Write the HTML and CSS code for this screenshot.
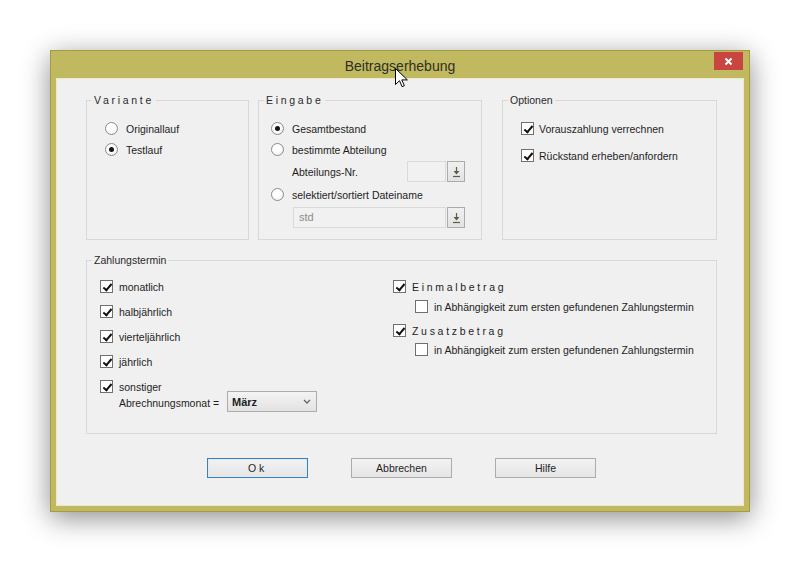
FILE: index.html
```html
<!DOCTYPE html>
<html lang="de">
<head>
<meta charset="UTF-8" />
<title>Beitragserhebung</title>
<link rel="stylesheet" href="styles.css">
</head>
<body>
  <div class="window">
    <div class="titlebar">
      <span class="title">Beitragserhebung</span>
      <button class="close" type="button" aria-label="Schließen">
        <svg width="9" height="9" viewBox="0 0 9 9"><path d="M1.5 1.5l6 6M7.5 1.5l-6 6" stroke="#fff" stroke-width="2"/></svg>
      </button>
    </div>

    <form class="client">
      <div class="top-row">
        <fieldset class="group group-variante">
          <legend class="spaced">Variante</legend>
          <div class="inner">
            <div class="row"><span class="radio"></span>Originallauf</div>
            <div class="row"><span class="radio on"></span>Testlauf</div>
          </div>
        </fieldset>

        <fieldset class="group group-eingabe">
          <legend class="spaced">Eingabe</legend>
          <div class="inner">
            <div class="row"><span class="radio on"></span>Gesamtbestand</div>
            <div class="row"><span class="radio"></span>bestimmte Abteilung</div>
            <div class="row sub">
              Abteilungs-Nr.
              <div class="combo small">
                <span class="field"></span>
                <span class="pick"><svg width="9" height="12" viewBox="0 0 9 12"><path d="M4.5 1v5" stroke="#5b5d48" stroke-width="1.2"/><path d="M1.5 5h6l-3 3.5z" fill="#5b5d48"/><path d="M1 10.5h7" stroke="#5b5d48" stroke-width="1.2"/></svg></span>
              </div>
            </div>
            <div class="row gap2"><span class="radio"></span>selektiert/sortiert Dateiname</div>
            <div class="row gap2 sub2">
              <div class="combo wide">
                <span class="field">std</span>
                <span class="pick"><svg width="9" height="12" viewBox="0 0 9 12"><path d="M4.5 1v5" stroke="#5b5d48" stroke-width="1.2"/><path d="M1.5 5h6l-3 3.5z" fill="#5b5d48"/><path d="M1 10.5h7" stroke="#5b5d48" stroke-width="1.2"/></svg></span>
              </div>
            </div>
          </div>
        </fieldset>

        <fieldset class="group group-optionen">
          <legend>Optionen</legend>
          <div class="inner">
            <div class="row"><span class="check on"></span>Vorauszahlung verrechnen</div>
            <div class="row"><span class="check on"></span>Rückstand erheben/anfordern</div>
          </div>
        </fieldset>
      </div>

      <fieldset class="group group-termin">
        <legend>Zahlungstermin</legend>
        <div class="inner termin-grid">
          <div class="col-left">
            <div class="crow"><span class="check on"></span>monatlich</div>
            <div class="crow"><span class="check on"></span>halbjährlich</div>
            <div class="crow"><span class="check on"></span>vierteljährlich</div>
            <div class="crow"><span class="check on"></span>jährlich</div>
            <div>
              <div class="crow"><span class="check on"></span>sonstiger</div>
              <div class="month-row">
                <span class="month-label">Abrechnungsmonat =</span>
                <div class="select">
                  <span>März</span>
                  <svg width="8" height="5" viewBox="0 0 8 5"><path d="M1 1l3 3 3-3" stroke="#666" stroke-width="1.3" fill="none"/></svg>
                </div>
              </div>
            </div>
          </div>
          <div class="col-right">
            <div class="crow"><span class="check on"></span><span class="spaced">Einmalbetrag</span></div>
            <div class="crow subrow first-sub"><span class="check"></span>in Abhängigkeit zum ersten gefundenen Zahlungstermin</div>
            <div class="crow second"><span class="check on"></span><span class="spaced">Zusatzbetrag</span></div>
            <div class="crow subrow second-sub"><span class="check"></span>in Abhängigkeit zum ersten gefundenen Zahlungstermin</div>
          </div>
        </div>
      </fieldset>

      <div class="buttons">
        <button type="button" class="btn default"><span class="spaced">Ok</span></button>
        <button type="button" class="btn">Abbrechen</button>
        <button type="button" class="btn">Hilfe</button>
      </div>
    </form>

    <!-- mouse pointer from the screenshot -->
    <svg class="cursor" width="13" height="20" viewBox="0 0 13 20"><path d="M0.5 0.5v16l4-3.8 2.6 6 2.3-1-2.6-5.8h5.6z" fill="#fff" stroke="#000" stroke-width="1"/></svg>
  </div>
</body>
</html>
```

FILE: styles.css
```css
* {
  box-sizing: border-box;
}
html, body {
  margin: 0;
  height: 100%;
}
body {
  background: #fff;
  display: flex;
  justify-content: center;
  align-items: center;
  font-family: "Liberation Sans", Arial, sans-serif;
  font-size: 10.5px;
  color: #1e1e1e;
}

.window {
  position: relative;
  width: 700px;
  height: 462px;
  background: #c1b960;
  border: 1px solid #a39c45;
  box-shadow: 0 6px 26px rgba(0,0,0,0.45);
  display: flex;
  flex-direction: column;
}

.titlebar {
  height: 28px;
  display: grid;
  grid-template-columns: 1fr auto 1fr;
  align-items: center;
}
.title {
  grid-column: 2;
  font-size: 14px;
  color: #2f2f22;
  padding-top: 1px;
}
.close {
  grid-column: 3;
  justify-self: end;
  align-self: start;
  margin: 1px 6px 0 0;
  width: 29px;
  height: 18px;
  border: none;
  padding: 0;
  background: #c8463f;
  display: flex;
  align-items: center;
  justify-content: center;
}

.client {
  flex: 1;
  margin: 0 6px 6px;
  background: #f0f0f0;
  box-shadow: 0 0 0 1px #ede9c8;
  padding: 14px 26px 0 29px;
}

.spaced {
  letter-spacing: 2.7px;
}

/* group boxes */
.group {
  margin: 0;
  padding: 0;
  min-width: 0;
  border: 1px solid #d8d8d8;
}
.group legend {
  margin-left: 5px;
  padding: 0 2px;
  line-height: 14px;
  color: #2a2a2a;
}
.top-row {
  display: flex;
  height: 147px;
}
.group-variante { width: 163px; }
.group-eingabe { width: 224px; margin-left: 9px; }
.group-optionen { width: 215px; margin-left: 20px; }

.group-variante .inner { padding: 11px 0 0 18px; }
.group-eingabe .inner { padding: 11px 16px 0 12px; }
.group-optionen .inner { padding: 11px 0 0 18px; }

.row {
  height: 21px;
  display: flex;
  align-items: center;
  gap: 8px;
  white-space: nowrap;
}
.group-optionen .row { gap: 5px; }
.group-optionen .row + .row { margin-top: 6px; }

.row.sub {
  margin-top: 1px;
  padding-left: 21px;
}
.row.gap2 { margin-top: 2px; }
.row.sub2 { padding-left: 22px; }

/* radio & check boxes */
.radio {
  width: 13px;
  height: 13px;
  flex: none;
  border-radius: 50%;
  border: 1px solid #8b8b8b;
  background: radial-gradient(circle at 40% 40%, #fff 40%, #e6e6e6);
  display: flex;
  align-items: center;
  justify-content: center;
}
.radio.on::after {
  content: "";
  width: 5px;
  height: 5px;
  border-radius: 50%;
  background: #151515;
}
.check {
  width: 13px;
  height: 13px;
  flex: none;
  border: 1px solid #707070;
  background: #fff;
  position: relative;
}
.check.on::after {
  content: "";
  position: absolute;
  left: 3.5px;
  top: 0.5px;
  width: 3px;
  height: 7px;
  border: solid #111;
  border-width: 0 2.2px 2.2px 0;
  transform: rotate(40deg);
}

/* disabled drop-down fields */
.combo {
  display: flex;
  height: 21px;
}
.combo.small {
  margin-left: auto;
  width: 58px;
}
.combo.wide {
  flex: 1;
}
.combo .field {
  flex: 1;
  border: 1px solid #dadada;
  background: #f1f1f1;
  color: #8c8c8c;
  padding: 0 5px;
  line-height: 19px;
  font-size: 11px;
}
.combo .pick {
  width: 18px;
  margin-left: 1px;
  border: 1px solid #ababab;
  background: linear-gradient(#f0f0f0, #e2e2e2);
  display: flex;
  align-items: center;
  justify-content: center;
}

/* Zahlungstermin */
.group-termin {
  margin-top: 13px;
  height: 181px;
}
.termin-grid {
  display: grid;
  grid-template-columns: 293px 1fr;
  padding: 13px 0 0 13px;
}
.col-left {
  display: flex;
  flex-direction: column;
  gap: 12px;
}
.crow {
  height: 13px;
  display: flex;
  align-items: center;
  gap: 6px;
  white-space: nowrap;
}
.month-row {
  margin-top: -2px;
  height: 21px;
  display: flex;
  align-items: center;
  padding-left: 19px;
}
.month-label {
  width: 108px;
  padding-top: 2px;
}
.select {
  width: 90px;
  height: 21px;
  border: 1px solid #acacac;
  background: linear-gradient(#f3f3f3, #e3e3e3);
  display: flex;
  align-items: center;
  justify-content: space-between;
  padding: 0 5px 0 4px;
  font-weight: bold;
  font-size: 11px;
}
.subrow { padding-left: 22px; }
.first-sub { margin-top: 7px; }
.second { margin-top: 11px; }
.second-sub { margin-top: 6px; }

/* dialog buttons */
.buttons {
  display: flex;
  gap: 43px;
  margin-top: 24px;
  padding-left: 121px;
}
.btn {
  width: 101px;
  height: 20px;
  padding: 0;
  font-family: inherit;
  font-size: 10.5px;
  color: #1e1e1e;
  border: 1px solid #acacac;
  background: linear-gradient(#f2f2f2, #e5e5e5);
}
.btn.default {
  border-color: #3c7fb1;
  box-shadow: inset 0 0 0 1px #dcecfc;
}

.cursor {
  position: absolute;
  left: 344px;
  top: 17px;
}
```
